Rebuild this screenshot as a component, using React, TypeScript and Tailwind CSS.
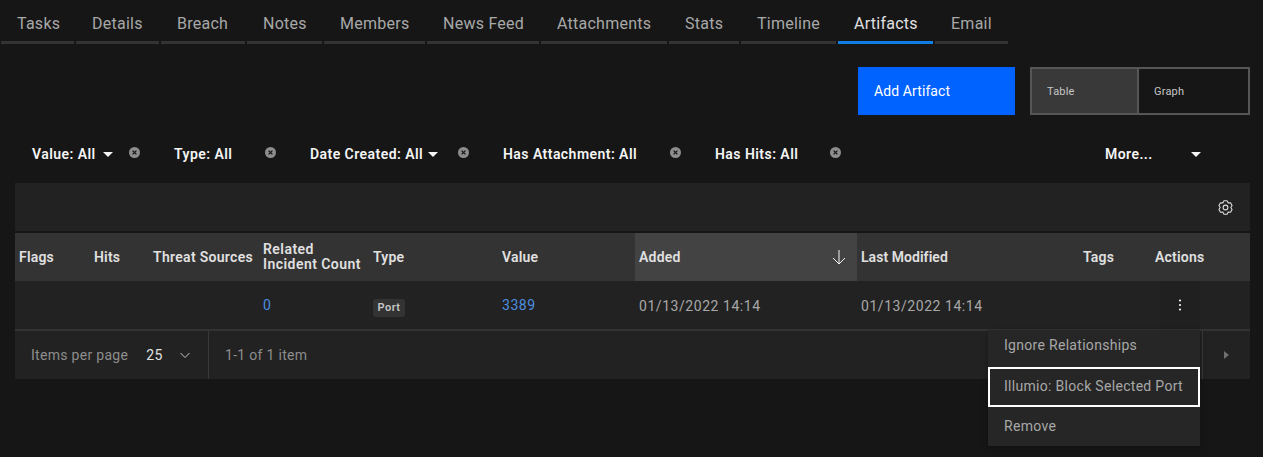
const tabs = [
  { label: 'Tasks', width: 'w-[73px]' },
  { label: 'Details', width: 'w-[83px]' },
  { label: 'Breach', width: 'w-[84px]' },
  { label: 'Notes', width: 'w-[75px]' },
  { label: 'Members', width: 'w-[101px]' },
  { label: 'News Feed', width: 'w-[112px]' },
  { label: 'Attachments', width: 'w-[126px]' },
  { label: 'Stats', width: 'w-[70px]' },
  { label: 'Timeline', width: 'w-[95px]' },
  { label: 'Artifacts', width: 'w-[95px]', active: true },
  { label: 'Email', width: 'w-[73px]' },
];

const filters = [
  { label: 'Value: All', width: 'w-[142px]', caret: 'ml-[7px]' },
  { label: 'Type: All', width: 'w-[136px]' },
  { label: 'Date Created: All', width: 'w-[193px]', caret: 'ml-[5px]' },
  { label: 'Has Attachment: All', width: 'w-[212px]' },
  { label: 'Has Hits: All', width: 'w-[160px]' },
];

const gridCols = 'grid grid-cols-[75px_59px_110px_110px_129px_137px_222px_222px_72px_99px]';

function Caret() {
  return (
    <svg width="10" height="5" viewBox="0 0 10 5" className="shrink-0">
      <path d="M0 0h10L5 5z" fill="#f4f4f4" />
    </svg>
  );
}

function CloseFilled() {
  return (
    <svg width="11" height="11" viewBox="0 0 11 11" className="shrink-0">
      <circle cx="5.5" cy="5.5" r="5.5" fill="#8d8d8d" />
      <path d="M3.6 3.6l3.8 3.8M7.4 3.6L3.6 7.4" stroke="#161616" strokeWidth="1.3" />
    </svg>
  );
}

// six tooth gear like the one in the table toolbar
function Gear() {
  return (
    <svg width="15" height="15" viewBox="0 0 24 24" fill="none" stroke="#e0e0e0" strokeWidth="1.7" strokeLinejoin="round">
      <path d="M9.5 1.3h5l1.75 3.34 3.79-.14 2.48 4.28L20.5 12l2.02 3.22-2.48 4.28-3.79-.14-1.75 3.34h-5l-1.75-3.34-3.79.14-2.48-4.28L3.5 12 1.48 8.78 3.96 4.5l3.79.14z" />
      <circle cx="12" cy="12" r="3.8" />
    </svg>
  );
}

export default function App() {
  return (
    <div className="w-[1263px] h-[457px] overflow-hidden bg-[#161616] font-['Roboto',sans-serif] text-[#c6c6c6]">
      {/* Tabs */}
      <div className="flex gap-[2px] pl-[1px]">
        {tabs.map((tab) => (
          <div
            key={tab.label}
            className={`${tab.width} h-[44px] pl-4 pt-[14px] text-[16px] leading-[20px] tracking-[0.25px] border-b-[3px] ${
              tab.active ? 'border-[#0f7fe6] text-[#e0e0e0]' : 'border-[#333333] text-[#a8a8a8]'
            }`}
          >
            {tab.label}
          </div>
        ))}
      </div>

      {/* Actions */}
      <div className="flex justify-end gap-[15px] pr-[13px] mt-[23px]">
        <div className="w-[157px] h-[48px] bg-[#0062ff] text-white text-[14px] tracking-[0.1px] pl-4 flex items-center">
          Add Artifact
        </div>
        <div className="w-[220px] h-[48px] border-2 border-[#565656] flex text-[11px] tracking-[0.2px] text-[#c6c6c6]">
          <div className="w-[107px] bg-[#393939] border-r-2 border-[#565656] pl-[15px] pt-[2px] flex items-center">Table</div>
          <div className="flex-1 pl-[15px] pt-[2px] flex items-center">Graph</div>
        </div>
      </div>

      {/* Filters */}
      <div className="flex items-center h-[20px] mt-[29px] pl-[32px] pr-[62px] text-[14px] font-semibold tracking-[0.45px] text-[#f4f4f4]">
        {filters.map((filter) => (
          <div key={filter.label} className={`${filter.width} flex items-center pr-[34px]`}>
            <span>{filter.label}</span>
            {filter.caret && (
              <span className={filter.caret}>
                <Caret />
              </span>
            )}
            <span className="ml-auto -mt-[3px]">
              <CloseFilled />
            </span>
          </div>
        ))}
        <div className="ml-auto flex items-center w-[96px] justify-between">
          <span>More...</span>
          <Caret />
        </div>
      </div>

      {/* Table panel */}
      <div className="relative ml-[15px] w-[1235px] mt-[19px] bg-[#222222]">
        <div className="h-[48px] flex items-center justify-end pr-[17px]">
          <Gear />
        </div>
        <div className="h-[2px] bg-[#161616]" />

        <div className={`${gridCols} h-[48px] bg-[#333333] text-[14px] font-semibold leading-[15px] tracking-[0.2px] text-[#e0e0e0] items-center`}>
          <div className="pl-1">Flags</div>
          <div className="pl-1">Hits</div>
          <div className="pl-1 whitespace-nowrap tracking-[0.3px]">Threat Sources</div>
          <div className="pl-1 whitespace-nowrap tracking-[0.45px]">
            Related
            <br />
            Incident Count
          </div>
          <div className="pl-1">Type</div>
          <div className="pl-1">Value</div>
          <div className="h-full bg-[#434343] pl-1 pr-[9px] flex items-center justify-between">
            <span>Added</span>
            <svg width="18" height="18" viewBox="0 0 18 18" fill="none" stroke="#f4f4f4" strokeWidth="1">
              <path d="M9 2v14M3 10l6 6 6-6" />
            </svg>
          </div>
          <div className="pl-1 tracking-[0.05px]">Last Modified</div>
          <div className="pl-1">Tags</div>
          <div className="pl-1">Actions</div>
        </div>

        <div className={`${gridCols} h-[48px] text-[14px] tracking-[0.55px] items-center`}>
          <div />
          <div />
          <div />
          <div className="pl-1 text-[#4d8fe0]">0</div>
          <div className="pl-1 pt-[2px]">
            <span className="inline-block h-[18px] w-[32px] text-center rounded-[3px] bg-[#333333] text-[11px] font-semibold leading-[18px] text-[#c6c6c6] tracking-[0.5px]">
              Port
            </span>
          </div>
          <div className="pl-1 text-[#4d8fe0]">3389</div>
          <div className="pl-1 pt-[2px] text-[#a8a8a8]">01/13/2022 14:14</div>
          <div className="pl-1 pt-[2px] text-[#a8a8a8]">01/13/2022 14:14</div>
          <div />
          <div className="h-full pl-[9px]">
            <div className="w-[40px] h-full flex items-center justify-center bg-[#202020]">
              <svg width="4" height="12" viewBox="0 0 4 12" fill="#f4f4f4">
                <circle cx="2" cy="1.5" r="1.1" />
                <circle cx="2" cy="6" r="1.1" />
                <circle cx="2" cy="10.5" r="1.1" />
              </svg>
            </div>
          </div>
        </div>
        <div className="h-[2px] bg-[#333333]" />

        {/* Pagination */}
        <div className="h-[48px] flex items-center text-[14px] tracking-[0.3px]">
          <div className="w-[194px] h-full border-r border-[#393939] flex items-center pl-4">
            <span className="text-[#8d8d8d]">Items per page</span>
            <span className="ml-[18px] text-[#e0e0e0]">25</span>
            <svg width="12" height="12" viewBox="0 0 12 12" fill="none" stroke="#c6c6c6" className="ml-[16px]">
              <path d="M1.5 4l4.5 4.5L10.5 4" />
            </svg>
          </div>
          <div className="pl-4 text-[#8d8d8d]">1-1 of 1 item</div>
          <div className="ml-auto w-[48px] h-full border-l border-[#393939] flex items-center justify-center">
            <svg width="5" height="8" viewBox="0 0 5 8" fill="#6f6f6f">
              <path d="M0 0l5 4-5 4z" />
            </svg>
          </div>
        </div>

        {/* Overflow menu */}
        <div className="absolute left-[973px] top-[147px] w-[212px] bg-[#262626] text-[14px] tracking-[0.3px] text-[#a8a8a8] shadow-[0_2px_6px_rgba(0,0,0,0.3)]">
          <div className="h-[37px] pl-4 pb-[6px] flex items-center">Ignore Relationships</div>
          <div className="h-[40px] pl-[14px] pb-[2px] flex items-center border-2 border-white">Illumio: Block Selected Port</div>
          <div className="h-[39px] pl-4 flex items-center">Remove</div>
        </div>
      </div>
    </div>
  );
}
